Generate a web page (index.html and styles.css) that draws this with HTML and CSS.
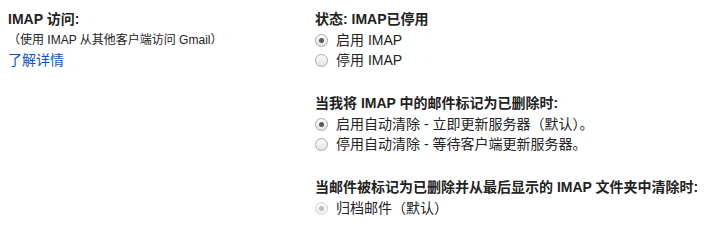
FILE: index.html
```html
<!DOCTYPE html>
<html lang="zh-CN">
<head>
<meta charset="utf-8">
<title>IMAP 访问</title>
<link rel="stylesheet" href="styles.css">
</head>
<body>
<div class="settings">
  <div class="label-col">
    <div class="title">IMAP 访问:</div>
    <div class="sub">（使用 IMAP 从其他客户端访问 Gmail）</div>
    <div class="row"><a class="link" href="#">了解详情</a></div>
  </div>
  <div class="options-col">
    <div class="group">
      <div class="title">状态: IMAP已停用</div>
      <label class="option"><input class="radio" type="radio" name="imap" checked><span>启用 IMAP</span></label>
      <label class="option"><input class="radio" type="radio" name="imap"><span>停用 IMAP</span></label>
    </div>
    <div class="group">
      <div class="title">当我将 IMAP 中的邮件标记为已删除时:</div>
      <label class="option"><input class="radio" type="radio" name="expunge" checked><span>启用自动清除 - 立即更新服务器（默认）。</span></label>
      <label class="option"><input class="radio" type="radio" name="expunge"><span>停用自动清除 - 等待客户端更新服务器。</span></label>
    </div>
    <div class="group">
      <div class="title">当邮件被标记为已删除并从最后显示的 IMAP 文件夹中清除时:</div>
      <label class="option"><input class="radio" type="radio" name="archive" checked disabled><span>归档邮件（默认）</span></label>
    </div>
  </div>
</div>
</body>
</html>
```

FILE: styles.css
```css
html, body {
  margin: 0;
  padding: 0;
  background: #ffffff;
}

body {
  font-family: "Liberation Sans", Arial, "Noto Sans CJK SC", sans-serif;
  font-size: 14px;
  line-height: 20px;
  color: #222222;
}

.settings {
  display: grid;
  grid-template-columns: 307px 1fr;
  padding: 9px 0 0 8px;
}

.label-col,
.options-col {
  display: flex;
  flex-direction: column;
}

.options-col {
  gap: 23px;
}

.group {
  display: flex;
  flex-direction: column;
}

.title {
  font-weight: bold;
  height: 20px;
  margin-bottom: 1px;
  white-space: nowrap;
}

.sub {
  font-size: 12px;
  height: 20px;
  white-space: nowrap;
}

.row {
  height: 20px;
}

.link {
  color: #1155cc;
  text-decoration: none;
}

.option {
  display: flex;
  align-items: center;
  gap: 8px;
  height: 20px;
  white-space: nowrap;
}

.radio {
  appearance: none;
  -webkit-appearance: none;
  margin: 0;
  width: 13px;
  height: 13px;
  border-radius: 50%;
  border: 1px solid #a9a9a9;
  background: linear-gradient(#fdfdfd, #e2e2e2);
  box-sizing: border-box;
  position: relative;
  flex: none;
}

.radio:checked::after {
  content: "";
  position: absolute;
  left: 3px;
  top: 3px;
  width: 5px;
  height: 5px;
  border-radius: 50%;
  background: #5a5a5a;
}

.radio:disabled {
  border-color: #d2d2d2;
  background: linear-gradient(#fafafa, #efefef);
}

.radio:disabled:checked::after {
  background: #bdbdbd;
}
```
